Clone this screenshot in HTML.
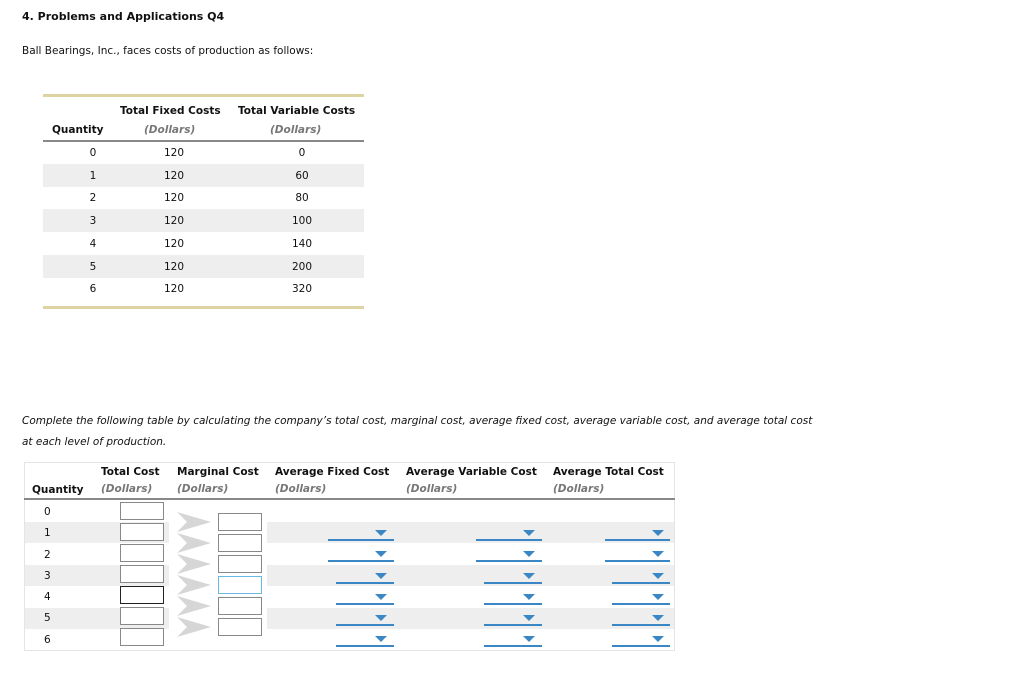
<!DOCTYPE html>
<html><head><style>
body{margin:0;background:#fff;font-family:"DejaVu Sans",Verdana,sans-serif;font-size:10.5px;color:#111;}
.a{position:absolute;white-space:nowrap}
.b{font-weight:bold}
.i{font-style:italic;color:#777;font-weight:bold}
.sh{position:absolute;background:#eeeeee}
.c{position:absolute;text-align:center}
.box{position:absolute;width:42px;height:17px;border:1px solid #888;background:#fff;box-sizing:border-box}
.ln{position:absolute;height:2px;background:#3b87c6}
.ar{position:absolute;width:0;height:0;border-left:6px solid transparent;border-right:6px solid transparent;border-top:6px solid #3b87c6}
</style></head><body>
<div class="a b" style="left:22px;top:10px;font-size:11px">4. Problems and Applications Q4</div>
<div class="a" style="left:22px;top:45px">Ball Bearings, Inc., faces costs of production as follows:</div>

<div style="position:absolute;left:43px;top:94px;width:321px;height:3px;background:#ddd3a3"></div>
<div class="a b" style="left:120px;top:105px">Total Fixed Costs</div>
<div class="a b" style="left:238px;top:105px">Total Variable Costs</div>
<div class="a b" style="left:52px;top:124px">Quantity</div>
<div class="a i" style="left:144px;top:124px">(Dollars)</div>
<div class="a i" style="left:270px;top:124px">(Dollars)</div>
<div style="position:absolute;left:43px;top:140px;width:321px;height:2px;background:#888"></div>
<div class="sh" style="left:43px;top:164px;width:321px;height:23px"></div>
<div class="sh" style="left:43px;top:209px;width:321px;height:23px"></div>
<div class="sh" style="left:43px;top:255px;width:321px;height:23px"></div>
<div class="c" style="left:43px;top:142px;width:100px;line-height:22.7px">0<br>1<br>2<br>3<br>4<br>5<br>6</div>
<div class="c" style="left:124px;top:142px;width:100px;line-height:22.7px">120<br>120<br>120<br>120<br>120<br>120<br>120</div>
<div class="c" style="left:252px;top:142px;width:100px;line-height:22.7px">0<br>60<br>80<br>100<br>140<br>200<br>320</div>
<div style="position:absolute;left:43px;top:306px;width:321px;height:3px;background:#ddd3a3"></div>

<div class="a" style="left:22px;top:415px;font-style:italic">Complete the following table by calculating the company’s total cost, marginal cost, average fixed cost, average variable cost, and average total cost</div>
<div class="a" style="left:22px;top:436px;font-style:italic">at each level of production.</div>

<div style="position:absolute;left:24px;top:462px;width:651px;height:189px;border:1px solid #e4e4e4;box-sizing:border-box"></div>
<div class="a b" style="left:101px;top:466px">Total Cost</div>
<div class="a b" style="left:177px;top:466px">Marginal Cost</div>
<div class="a b" style="left:275px;top:466px">Average Fixed Cost</div>
<div class="a b" style="left:406px;top:466px">Average Variable Cost</div>
<div class="a b" style="left:553px;top:466px">Average Total Cost</div>
<div class="a b" style="left:32px;top:484px">Quantity</div>
<div class="a i" style="left:101px;top:483px">(Dollars)</div>
<div class="a i" style="left:177px;top:483px">(Dollars)</div>
<div class="a i" style="left:275px;top:483px">(Dollars)</div>
<div class="a i" style="left:406px;top:483px">(Dollars)</div>
<div class="a i" style="left:553px;top:483px">(Dollars)</div>
<div style="position:absolute;left:24px;top:498px;width:651px;height:2px;background:#888"></div>
<div class="sh" style="left:25px;top:522px;width:144px;height:21px"></div>
<div class="sh" style="left:25px;top:565px;width:144px;height:21px"></div>
<div class="sh" style="left:25px;top:608px;width:144px;height:21px"></div>
<div class="sh" style="left:267px;top:522px;width:407px;height:21px"></div>
<div class="sh" style="left:267px;top:565px;width:407px;height:21px"></div>
<div class="sh" style="left:267px;top:608px;width:407px;height:21px"></div>
<div class="a" style="left:44px;top:502px;line-height:21.3px;white-space:normal;width:10px">0 1 2 3 4 5 6</div>

<div class="box" style="left:120px;top:502px;height:18px;width:44px"></div>
<div class="box" style="left:120px;top:523px;height:18px;width:44px"></div>
<div class="box" style="left:120px;top:544px;height:18px;width:44px"></div>
<div class="box" style="left:120px;top:565px;height:18px;width:44px"></div>
<div class="box" style="left:120px;top:586px;height:18px;width:44px;border-color:#222"></div>
<div class="box" style="left:120px;top:607px;height:18px;width:44px"></div>
<div class="box" style="left:120px;top:628px;height:18px;width:44px"></div>

<svg style="position:absolute;left:175px;top:512px" width="40" height="130">
<g fill="#d6d6d6">
<path d="M2,0 L36,10 L2,20 L12,10Z"/>
<path d="M2,21 L36,31 L2,41 L12,31Z"/>
<path d="M2,42 L36,52 L2,62 L12,52Z"/>
<path d="M2,63 L36,73 L2,83 L12,73Z"/>
<path d="M2,84 L36,94 L2,104 L12,94Z"/>
<path d="M2,105 L36,115 L2,125 L12,115Z"/>
</g></svg>
<div class="box" style="left:218px;top:513px;height:18px;width:44px"></div>
<div class="box" style="left:218px;top:534px;height:18px;width:44px"></div>
<div class="box" style="left:218px;top:555px;height:18px;width:44px"></div>
<div class="box" style="left:218px;top:576px;height:18px;width:44px;border-color:#6ab8e6"></div>
<div class="box" style="left:218px;top:597px;height:18px;width:44px"></div>
<div class="box" style="left:218px;top:618px;height:18px;width:44px"></div>

<div class="ln" style="left:328px;top:539px;width:66px"></div><div class="ar" style="left:375px;top:530px"></div>
<div class="ln" style="left:328px;top:560px;width:66px"></div><div class="ar" style="left:375px;top:551px"></div>
<div class="ln" style="left:336px;top:582px;width:58px"></div><div class="ar" style="left:375px;top:573px"></div>
<div class="ln" style="left:336px;top:603px;width:58px"></div><div class="ar" style="left:375px;top:594px"></div>
<div class="ln" style="left:336px;top:624px;width:58px"></div><div class="ar" style="left:375px;top:615px"></div>
<div class="ln" style="left:336px;top:645px;width:58px"></div><div class="ar" style="left:375px;top:636px"></div>

<div class="ln" style="left:476px;top:539px;width:66px"></div><div class="ar" style="left:523px;top:530px"></div>
<div class="ln" style="left:476px;top:560px;width:66px"></div><div class="ar" style="left:523px;top:551px"></div>
<div class="ln" style="left:484px;top:582px;width:58px"></div><div class="ar" style="left:523px;top:573px"></div>
<div class="ln" style="left:484px;top:603px;width:58px"></div><div class="ar" style="left:523px;top:594px"></div>
<div class="ln" style="left:484px;top:624px;width:58px"></div><div class="ar" style="left:523px;top:615px"></div>
<div class="ln" style="left:484px;top:645px;width:58px"></div><div class="ar" style="left:523px;top:636px"></div>

<div class="ln" style="left:605px;top:539px;width:65px"></div><div class="ar" style="left:652px;top:530px"></div>
<div class="ln" style="left:605px;top:560px;width:65px"></div><div class="ar" style="left:652px;top:551px"></div>
<div class="ln" style="left:612px;top:582px;width:58px"></div><div class="ar" style="left:652px;top:573px"></div>
<div class="ln" style="left:612px;top:603px;width:58px"></div><div class="ar" style="left:652px;top:594px"></div>
<div class="ln" style="left:612px;top:624px;width:58px"></div><div class="ar" style="left:652px;top:615px"></div>
<div class="ln" style="left:612px;top:645px;width:58px"></div><div class="ar" style="left:652px;top:636px"></div>
</body></html>
